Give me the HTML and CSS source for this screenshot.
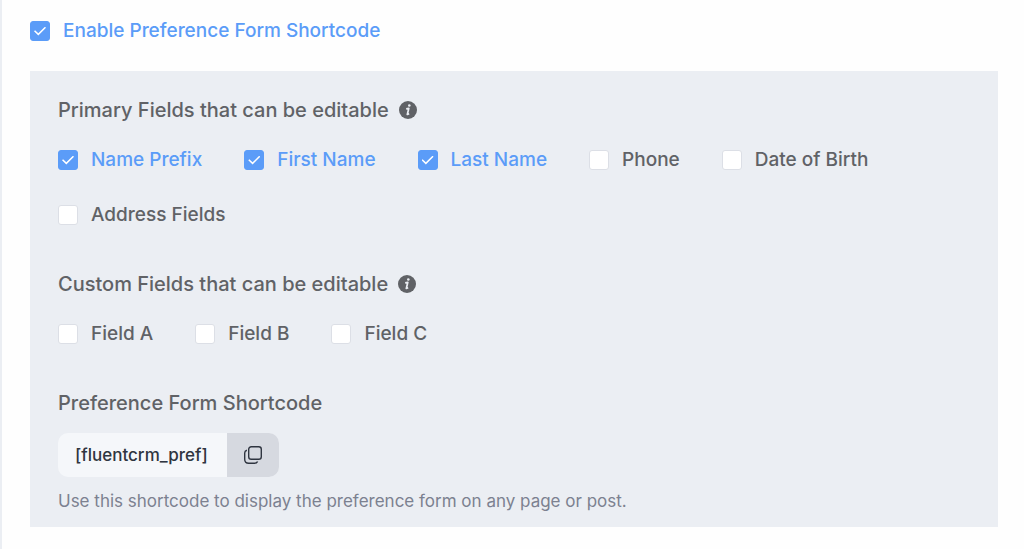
FILE: index.html
```html
<!DOCTYPE html>
<html lang="en">
<head>
  <meta charset="UTF-8" />
  <meta name="viewport" content="width=device-width, initial-scale=1.0" />
  <title>Preference Form</title>
  <link rel="stylesheet" href="styles.css">
</head>
<body>

  <main class="settings">
    <label class="check"><input type="checkbox" checked /><span>Enable Preference Form Shortcode</span></label>

    <div class="panel">
      <section class="group">
        <h2 class="title">
          Primary Fields that can be editable
          <svg class="info" viewBox="0 0 18 18" aria-hidden="true">
            <circle cx="9" cy="9" r="9" fill="#606266" />
            <circle cx="10.3" cy="4.5" r="1.3" fill="#ebeef3" />
            <path d="M7.200 7.800 9.800 7.300 8.300 13.500 10.200 12.700" fill="none" stroke="#ebeef3" stroke-width="1.7" stroke-linejoin="round" />
          </svg>
        </h2>
        <div class="checks">
          <label class="check"><input type="checkbox" checked /><span>Name Prefix</span></label>
          <label class="check"><input type="checkbox" checked /><span>First Name</span></label>
          <label class="check"><input type="checkbox" checked /><span>Last Name</span></label>
          <label class="check"><input type="checkbox" /><span>Phone</span></label>
          <label class="check"><input type="checkbox" /><span>Date of Birth</span></label>
          <label class="check"><input type="checkbox" /><span>Address Fields</span></label>
        </div>
      </section>

      <section class="group">
        <h2 class="title">
          Custom Fields that can be editable
          <svg class="info" viewBox="0 0 18 18" aria-hidden="true">
            <circle cx="9" cy="9" r="9" fill="#606266" />
            <circle cx="10.3" cy="4.5" r="1.3" fill="#ebeef3" />
            <path d="M7.200 7.800 9.800 7.300 8.300 13.500 10.200 12.700" fill="none" stroke="#ebeef3" stroke-width="1.7" stroke-linejoin="round" />
          </svg>
        </h2>
        <div class="checks">
          <label class="check"><input type="checkbox" /><span>Field A</span></label>
          <label class="check"><input type="checkbox" /><span>Field B</span></label>
          <label class="check"><input type="checkbox" /><span>Field C</span></label>
        </div>
      </section>

      <section>
        <h2 class="title">Preference Form Shortcode</h2>
        <div class="shortcode">
          <code class="code">[fluentcrm_pref]</code>
          <button class="copy" type="button" aria-label="Copy shortcode">
            <svg viewBox="0 0 18 18" width="18" height="18" fill="none" stroke="#2f3540" stroke-width="1.4" aria-hidden="true">
              <rect x="4.7" y="0.7" width="12.6" height="12.6" rx="2.6" />
              <path d="M2.9 4.2C1.4 4.6.7 5.5.7 7v6.300q0 4 4 4h5.600c1.800 0 2.800-.6 3.300-1.900" />
            </svg>
          </button>
        </div>
        <p class="hint">Use this shortcode to display the preference form on any page or post.</p>
      </section>
    </div>
  </main>

</body>
</html>
```
FILE: styles.css
```css
* {
  box-sizing: border-box;
}

body {
  margin: 0;
  min-height: 100vh;
  background-color: #fefefe;
  border-left: 2px solid #ebeef3;
  font-family: Inter, sans-serif;
  color: #606266;
}

.settings {
  padding: 18px 26px 22px 28px;
}

.check {
  display: inline-flex;
  align-items: center;
  gap: 13px;
  font-size: 19px;
  line-height: 26px;
  font-weight: 500;
  cursor: pointer;
}

.check input {
  appearance: none;
  width: 20px;
  height: 20px;
  margin: 0;
  border: 1px solid #dcdfe6;
  border-radius: 3px;
  background-color: #fff;
  display: grid;
  place-items: center;
}

.check input:checked {
  background-color: #5b9cf8;
  border-color: #5b9cf8;
}

.check input:checked::after {
  content: "";
  width: 12px;
  height: 9px;
  background-color: #fff;
  clip-path: polygon(0 54%, 9% 43%, 36% 76%, 91% 4%, 100% 15%, 36% 100%);
}

.check input:checked + span {
  color: #5b9cf8;
}

.panel {
  margin-top: 27px;
  padding: 25px 28px 14px;
  background-color: #ebeef3;
}

.group {
  margin-bottom: 42px;
}

.title {
  display: flex;
  align-items: center;
  gap: 10px;
  margin: 0;
  font-size: 20px;
  line-height: 28px;
  font-weight: 500;
}

.info {
  width: 18px;
  height: 18px;
}

.checks {
  display: flex;
  flex-wrap: wrap;
  gap: 29px 42px;
  margin-top: 23px;
}

.shortcode {
  display: inline-flex;
  margin-top: 16px;
  border-radius: 10px;
  background-color: #f5f7fa;
  overflow: hidden;
}

.code {
  padding: 0 19px 0 17px;
  font-family: inherit;
  font-size: 17px;
  line-height: 44px;
  font-weight: 500;
  color: #2f3540;
}

.copy {
  display: flex;
  align-items: center;
  justify-content: center;
  width: 52px;
  padding: 0;
  border: none;
  background-color: #d6d9e0;
  cursor: pointer;
}

.hint {
  margin: 12px 0 0;
  font-size: 17px;
  line-height: 24px;
  color: #7c8190;
}
```
